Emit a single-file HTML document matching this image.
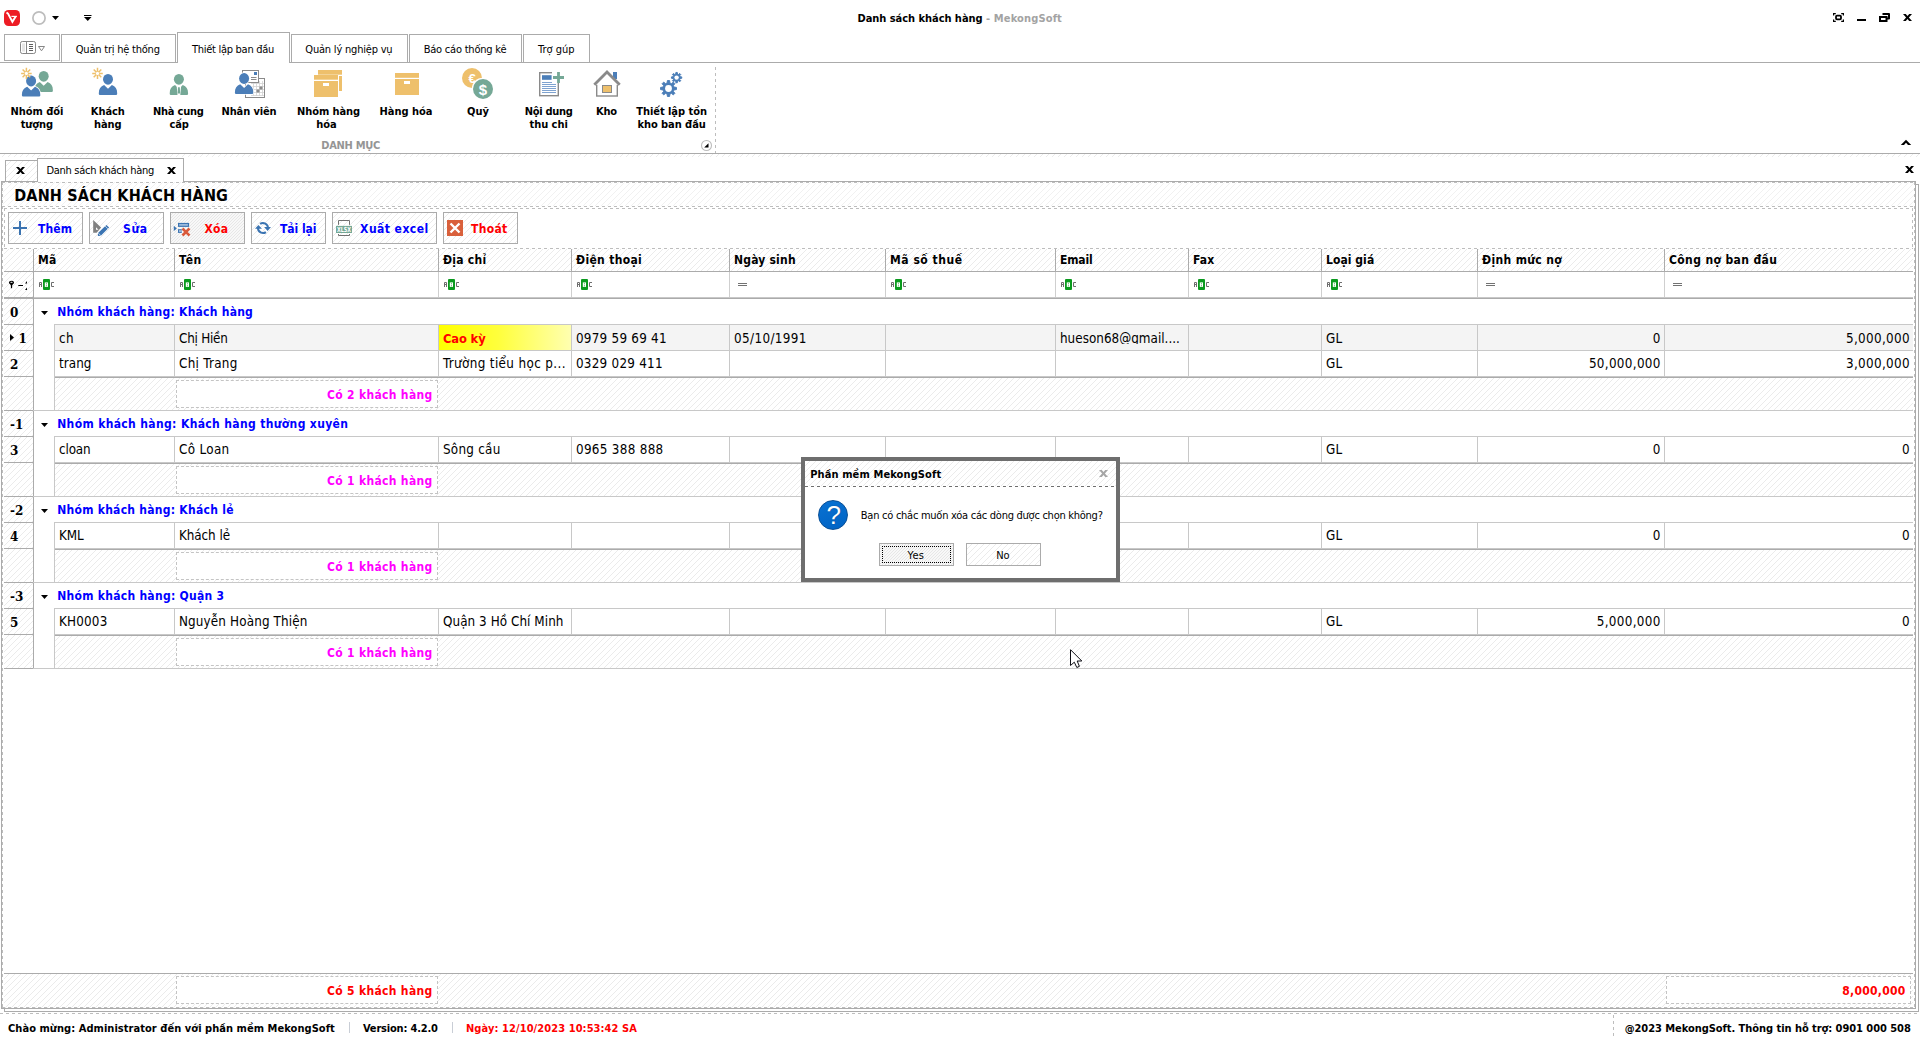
<!DOCTYPE html>
<html lang="vi"><head><meta charset="utf-8"><title>Danh sách khách hàng - MekongSoft</title>
<style>
html,body{margin:0;padding:0}
body{width:1920px;height:1038px;overflow:hidden;background:#fff;position:relative;font-family:'DejaVu Sans Condensed','DejaVu Sans','Liberation Sans',sans-serif;font-stretch:condensed;font-size:11px;color:#000}
body>div,body>svg,.t{position:absolute}
svg{overflow:visible}
.t{white-space:pre;line-height:normal}
.h{background-color:#fff;background-image:repeating-linear-gradient(135deg,transparent 0,transparent 3.45px,#ebebeb 3.45px,#ebebeb 4.2426px)}
.hl{background-image:repeating-linear-gradient(135deg,transparent 0,transparent 3.45px,#f1f1f1 3.45px,#f1f1f1 4.2426px)}
.hh{background-image:repeating-linear-gradient(135deg,#f8f8f8 0,#f8f8f8 1.06px,#e7e7e7 1.06px,#e7e7e7 2.1213px)}
.hd{background-image:repeating-linear-gradient(90deg,#bdbdbd 0,#bdbdbd 3px,transparent 3px,transparent 6px)}
.vd{background-image:repeating-linear-gradient(180deg,#bdbdbd 0,#bdbdbd 3px,transparent 3px,transparent 6px)}
.dk{background-image:repeating-linear-gradient(90deg,#6e6e6e 0,#6e6e6e 3px,transparent 3px,transparent 6px)}
</style></head><body>
<!-- title bar -->
<svg style="left:4px;top:10px" width="16" height="16" viewBox="0 0 16 16"><rect width="16" height="16" rx="4.5" fill="#ed1c24"/><path d="M2.5 2.4L4 3.6L8.4 11.8L11.7 6.4" fill="none" stroke="#fff" stroke-width="1.9" stroke-linejoin="miter" stroke-miterlimit="6"/><path d="M7.4 6.4H12.9" stroke="#fff" stroke-width="1.2"/></svg>
<svg style="left:31px;top:10px" width="16" height="16" viewBox="0 0 16 16"><circle cx="8" cy="8" r="6.1" fill="none" stroke="#bdbdbd" stroke-width="1.7"/></svg>
<svg style="left:52px;top:16px" width="7" height="4" viewBox="0 0 7 4"><path d="M0 0h7L3.5 4z" fill="#000"/></svg>
<svg style="left:84px;top:14px" width="8" height="7" viewBox="0 0 8 7"><path d="M0 1.5h7.5" stroke="#000" stroke-width="1"/><path d="M0 3h7.5L3.75 7z" fill="#000"/></svg>
<span class="t" style="left:857.5px;top:12px;font-size:11px;font-weight:700;letter-spacing:-0.04px;">Danh sách khách hàng</span>
<span class="t" style="left:986.0px;top:12px;font-size:11px;font-weight:700;color:#a3a3a3;letter-spacing:0.14px;">- MekongSoft</span>
<svg style="left:1833px;top:13px" width="11" height="9" viewBox="0 0 11 9"><g fill="none" stroke="#000" stroke-width="1.2"><path d="M0.6 2.6V0.6H2.8M8.2 0.6H10.4V2.6M10.4 6.4V8.4H8.2M2.8 8.4H0.6V6.4"/></g><rect x="3" y="2.7" width="5" height="3.6" rx="1" fill="none" stroke="#000" stroke-width="1.8"/></svg>
<div style="left:1857px;top:19px;width:9px;height:2px;background:#000"></div>
<svg style="left:1879px;top:13px" width="11" height="9" viewBox="0 0 11 9"><path d="M3.5 1h6.5v4.5h-2" fill="none" stroke="#000" stroke-width="2" stroke-linejoin="round"/><rect x="1" y="4" width="6.5" height="4" fill="none" stroke="#000" stroke-width="2"/></svg>
<svg style="left:1903px;top:14px" width="9" height="7" viewBox="0 0 9 7"><path d="M0 0h2.8l1.7 2.1l1.7-2.1h2.8l-3.1 3.5l3.1 3.5h-2.8l-1.7-2.1l-1.7 2.1h-2.8l3.1-3.5z" fill="#000"/></svg>
<!-- ribbon tabs -->
<div style="left:0px;top:62px;width:1920px;height:1px;background:#ababab"></div>
<div style="left:4px;top:34px;width:56px;height:27px;border:1px solid #ababab;box-sizing:border-box;background:#fff"></div>
<svg style="left:20px;top:41px" width="26" height="13" viewBox="0 0 26 13"><rect x="0.5" y="0.5" width="15" height="12" rx="1.8" fill="#fff" stroke="#868686"/><path d="M6.5 0.5v12" stroke="#868686"/><rect x="2" y="2.5" width="3" height="8" fill="#e6e6e6"/><path d="M9 3.5h4M9 5.5h4M9 7.5h4M9 9.5h4" stroke="#5e5e5e" stroke-width="1"/><path d="M18.5 5.5h6l-3 4.3z" fill="#fff" stroke="#868686" stroke-width="1"/></svg>
<div style="left:61px;top:34px;width:115px;height:29px;border:1px solid #ababab;border-bottom:none;box-sizing:border-box;background:#fff"></div>
<div style="left:61px;top:62px;width:115px;height:1px;background:#ababab"></div>
<span class="t" style="left:75.8px;top:43px;font-size:11px;letter-spacing:-0.22px;">Quản trị hệ thống</span>
<div style="left:177px;top:32px;width:113px;height:31px;border:1px solid #ababab;border-bottom:none;box-sizing:border-box;background:#fff"></div>
<span class="t" style="left:191.9px;top:43px;font-size:11px;letter-spacing:-0.27px;">Thiết lập ban đầu</span>
<div style="left:291px;top:34px;width:117px;height:29px;border:1px solid #ababab;border-bottom:none;box-sizing:border-box;background:#fff"></div>
<div style="left:291px;top:62px;width:117px;height:1px;background:#ababab"></div>
<span class="t" style="left:305.3px;top:43px;font-size:11px;letter-spacing:-0.20px;">Quản lý nghiệp vụ</span>
<div style="left:409px;top:34px;width:113px;height:29px;border:1px solid #ababab;border-bottom:none;box-sizing:border-box;background:#fff"></div>
<div style="left:409px;top:62px;width:113px;height:1px;background:#ababab"></div>
<span class="t" style="left:423.7px;top:43px;font-size:11px;letter-spacing:-0.22px;">Báo cáo thống kê</span>
<div style="left:523px;top:34px;width:67px;height:29px;border:1px solid #ababab;border-bottom:none;box-sizing:border-box;background:#fff"></div>
<div style="left:523px;top:62px;width:67px;height:1px;background:#ababab"></div>
<span class="t" style="left:538.0px;top:43px;font-size:11px;">Trợ gúp</span>
<!-- ribbon content -->
<svg style="left:21px;top:67px" width="32" height="32" viewBox="0 0 32 32"><g transform="translate(13.5,3.9) scale(1)" fill="#75a896"><ellipse cx="9.2" cy="5.4" rx="5" ry="5.4"/><path d="M0 19.5c0-4.5 1.8-7.3 5.3-8.4l3.9 3.7l3.9-3.7c3.5 1.1 5.3 3.9 5.3 8.4c0 1-0.6 1.5-1.6 1.5h-15.2c-1 0-1.6-0.5-1.6-1.5z"/></g><g stroke="#fff" stroke-width="1.4"><g transform="translate(0.9,8.6) scale(1)" fill="#4b7eb8"><ellipse cx="9.2" cy="5.4" rx="5" ry="5.4"/><path d="M0 19.5c0-4.5 1.8-7.3 5.3-8.4l3.9 3.7l3.9-3.7c3.5 1.1 5.3 3.9 5.3 8.4c0 1-0.6 1.5-1.6 1.5h-15.2c-1 0-1.6-0.5-1.6-1.5z"/></g></g><g transform="translate(0.9,8.6) scale(1)" fill="#4b7eb8"><ellipse cx="9.2" cy="5.4" rx="5" ry="5.4"/><path d="M0 19.5c0-4.5 1.8-7.3 5.3-8.4l3.9 3.7l3.9-3.7c3.5 1.1 5.3 3.9 5.3 8.4c0 1-0.6 1.5-1.6 1.5h-15.2c-1 0-1.6-0.5-1.6-1.5z"/></g><g transform="translate(0.1,0.8)" stroke="#eec06c" stroke-width="1.5" fill="none"><path d="M5.3 0v11.2M0 5.6h10.6M1.5 1.7l7.6 7.8M9.1 1.7l-7.6 7.8"/><circle cx="5.3" cy="5.6" r="1.6" fill="#fff" stroke="none"/></g></svg>
<svg style="left:92px;top:67px" width="26" height="30" viewBox="0 0 26 30"><g transform="translate(0.2,0.8)" stroke="#eec06c" stroke-width="1.5" fill="none"><path d="M5.3 0v11.2M0 5.6h10.6M1.5 1.7l7.6 7.8M9.1 1.7l-7.6 7.8"/><circle cx="5.3" cy="5.6" r="1.6" fill="#fff" stroke="none"/></g><g transform="translate(6.8,6.9) scale(1)" fill="#4b7eb8"><ellipse cx="9.2" cy="5.4" rx="5" ry="5.4"/><path d="M0 19.5c0-4.5 1.8-7.3 5.3-8.4l3.9 3.7l3.9-3.7c3.5 1.1 5.3 3.9 5.3 8.4c0 1-0.6 1.5-1.6 1.5h-15.2c-1 0-1.6-0.5-1.6-1.5z"/></g></svg>
<svg style="left:169px;top:73px" width="20" height="23" viewBox="0 0 20 23"><g transform="translate(0.7,0.9) scale(1)" fill="#75a896"><ellipse cx="9.2" cy="5.4" rx="5" ry="5.4"/><path d="M0 19.5c0-4.5 1.8-7.3 5.3-8.4l3.9 3.7l3.9-3.7c3.5 1.1 5.3 3.9 5.3 8.4c0 1-0.6 1.5-1.6 1.5h-15.2c-1 0-1.6-0.5-1.6-1.5z"/></g><path d="M7.6 12.3l2.3 2.4l2.3-2.4l-0.9 9.6h-2.8z" fill="#fff"/><path d="M9 14.3h1.8l0.4 6.3h-2.6z" fill="#75a896"/></svg>
<svg style="left:234px;top:70px" width="32" height="28" viewBox="0 0 32 28"><rect x="11.5" y="8.5" width="19" height="19" fill="#fff" stroke="#8a8a8a"/><g stroke="#d2d2d2" stroke-width="0.8"><path d="M19.5 11v15M22.5 11v15M25.5 11v15M28.5 11v15M17 13.5h13M17 16.5h13M17 19.5h13M17 22.5h13M17 25.5h13"/></g><rect x="25.5" y="16.5" width="3" height="3" fill="#8a8a8a"/><rect x="22.5" y="19.5" width="3" height="3" fill="#8a8a8a"/><rect x="8.5" y="0.5" width="16" height="12" fill="#fff" stroke="#8a8a8a"/><rect x="20" y="2" width="3" height="3" fill="#4b7eb8"/><path d="M17 7.5h5.5M17 9.5h5.5" stroke="#8a8a8a"/><g stroke="#fff" stroke-width="1.5"><g transform="translate(0.9,3.1) scale(1)" fill="#4b7eb8"><ellipse cx="9.2" cy="5.4" rx="5" ry="5.4"/><path d="M0 19.5c0-4.5 1.8-7.3 5.3-8.4l3.9 3.7l3.9-3.7c3.5 1.1 5.3 3.9 5.3 8.4c0 1-0.6 1.5-1.6 1.5h-15.2c-1 0-1.6-0.5-1.6-1.5z"/></g></g><g transform="translate(0.9,3.1) scale(1)" fill="#4b7eb8"><ellipse cx="9.2" cy="5.4" rx="5" ry="5.4"/><path d="M0 19.5c0-4.5 1.8-7.3 5.3-8.4l3.9 3.7l3.9-3.7c3.5 1.1 5.3 3.9 5.3 8.4c0 1-0.6 1.5-1.6 1.5h-15.2c-1 0-1.6-0.5-1.6-1.5z"/></g></svg>
<svg style="left:314px;top:70px" width="28" height="27" viewBox="0 0 28 27"><g fill="#eec06c"><rect x="4" y="0" width="24" height="4.7"/><rect x="25" y="6" width="3" height="15"/><rect x="0" y="5" width="24" height="4.7"/><rect x="0" y="11" width="24" height="16"/></g><rect x="9" y="13" width="6" height="3" fill="#fff"/></svg>
<svg style="left:395px;top:73px" width="24" height="22" viewBox="0 0 24 22"><g fill="#eec06c"><rect x="0" y="0" width="24" height="4.8"/><rect x="0" y="6" width="24" height="16"/></g><rect x="9" y="8" width="6" height="3" fill="#fff"/></svg>
<svg style="left:461px;top:67px" width="34" height="33" viewBox="0 0 34 33"><circle cx="11" cy="11" r="10" fill="#eec06c"/><circle cx="22" cy="22" r="11.2" fill="#fff"/><circle cx="22" cy="22" r="10" fill="#75a896"/><text x="11" y="15.5" text-anchor="middle" font-family="Liberation Sans,sans-serif" font-weight="700" font-size="13" fill="#fff">€</text><text x="22" y="27.5" text-anchor="middle" font-family="Liberation Sans,sans-serif" font-weight="700" font-size="15" fill="#fff">$</text></svg>
<svg style="left:539px;top:71px" width="26" height="26" viewBox="0 0 26 26"><rect x="0.7" y="1.7" width="18.6" height="23" fill="#fff" stroke="#8a8a8a" stroke-width="1.4"/><rect x="3" y="4.2" width="9.6" height="4.6" fill="#4b7eb8"/><g stroke="#7fa3d0" stroke-width="1"><path d="M3 11.5h14M3 13.5h14M3 15.5h14M3 17.5h14M3 19.5h14M3 21.5h14"/></g><rect x="13" y="0" width="13" height="12" fill="#fff"/><path d="M19.5 1v11M14 6.5h11" stroke="#75a896" stroke-width="2.8"/></svg>
<svg style="left:593px;top:69px" width="29" height="29" viewBox="0 0 29 29"><rect x="20" y="3" width="4" height="7" fill="#4b7eb8"/><rect x="3.7" y="14" width="20.6" height="13" fill="#fff" stroke="#8a8a8a" stroke-width="1.4"/><path d="M1.3 15.7L14 3L26.7 15.7" fill="#fff" stroke="#8a8a8a" stroke-width="2.8" stroke-linejoin="miter"/><rect x="9.5" y="16.5" width="9" height="7" fill="#eec06c" stroke="#8a8a8a" stroke-width="1"/></svg>
<svg style="left:658px;top:70px" width="26" height="28" viewBox="0 0 26 28"><path d="M18.43 17.41L18.43 19.59L15.92 19.92L15.33 21.33L16.87 23.34L15.34 24.87L13.33 23.33L11.92 23.92L11.59 26.43L9.41 26.43L9.08 23.92L7.67 23.33L5.66 24.87L4.13 23.34L5.67 21.33L5.08 19.92L2.57 19.59L2.57 17.41L5.08 17.08L5.67 15.67L4.13 13.66L5.66 12.13L7.67 13.67L9.08 13.08L9.41 10.57L11.59 10.57L11.92 13.08L13.33 13.67L15.34 12.13L16.87 13.66L15.33 15.67L15.92 17.08Z" fill="#4b7eb8" stroke="#4b7eb8" stroke-width="1" stroke-linejoin="round"/><circle cx="10.5" cy="18.5" r="3.4" fill="#fff"/><path d="M23.75 6.89L23.75 8.31L22.08 8.51L21.71 9.42L22.74 10.74L21.74 11.74L20.42 10.71L19.51 11.08L19.31 12.75L17.89 12.75L17.69 11.08L16.78 10.71L15.46 11.74L14.46 10.74L15.49 9.42L15.12 8.51L13.45 8.31L13.45 6.89L15.12 6.69L15.49 5.78L14.46 4.46L15.46 3.46L16.78 4.49L17.69 4.12L17.89 2.45L19.31 2.45L19.51 4.12L20.42 4.49L21.74 3.46L22.74 4.46L21.71 5.78L22.08 6.69Z" fill="#4b7eb8" stroke="#4b7eb8" stroke-width="1" stroke-linejoin="round"/><circle cx="18.6" cy="7.6" r="2.2" fill="#fff"/></svg>
<span class="t" style="left:10.5px;top:105px;font-size:11px;font-weight:700;letter-spacing:-0.05px;">Nhóm đối</span>
<span class="t" style="left:20.7px;top:118px;font-size:11px;font-weight:700;letter-spacing:-0.05px;">tượng</span>
<span class="t" style="left:90.8px;top:105px;font-size:11px;font-weight:700;letter-spacing:-0.05px;">Khách</span>
<span class="t" style="left:94.0px;top:118px;font-size:11px;font-weight:700;letter-spacing:-0.05px;">hàng</span>
<span class="t" style="left:152.9px;top:105px;font-size:11px;font-weight:700;letter-spacing:-0.21px;">Nhà cung</span>
<span class="t" style="left:169.4px;top:118px;font-size:11px;font-weight:700;letter-spacing:-0.05px;">cấp</span>
<span class="t" style="left:221.5px;top:105px;font-size:11px;font-weight:700;letter-spacing:-0.12px;">Nhân viên</span>
<span class="t" style="left:297.0px;top:105px;font-size:11px;font-weight:700;letter-spacing:-0.08px;">Nhóm hàng</span>
<span class="t" style="left:316.2px;top:118px;font-size:11px;font-weight:700;letter-spacing:-0.05px;">hóa</span>
<span class="t" style="left:379.6px;top:105px;font-size:11px;font-weight:700;letter-spacing:-0.03px;">Hàng hóa</span>
<span class="t" style="left:467.1px;top:105px;font-size:11px;font-weight:700;letter-spacing:-0.04px;">Quỹ</span>
<span class="t" style="left:524.8px;top:105px;font-size:11px;font-weight:700;letter-spacing:-0.32px;">Nội dung</span>
<span class="t" style="left:529.5px;top:118px;font-size:11px;font-weight:700;letter-spacing:-0.05px;">thu chi</span>
<span class="t" style="left:596.0px;top:105px;font-size:11px;font-weight:700;letter-spacing:-0.18px;">Kho</span>
<span class="t" style="left:636.2px;top:105px;font-size:11px;font-weight:700;letter-spacing:-0.04px;">Thiết lập tồn</span>
<span class="t" style="left:637.4px;top:118px;font-size:11px;font-weight:700;letter-spacing:-0.05px;">kho ban đầu</span>
<span class="t" style="left:321.2px;top:139px;font-size:11px;font-weight:700;color:#959595;letter-spacing:-0.28px;">DANH MỤC</span>
<div class="vd" style="left:715px;top:67px;width:1px;height:86px;"></div>
<svg style="left:701px;top:140px" width="12" height="12" viewBox="0 0 12 12"><circle cx="5.5" cy="5.5" r="5" fill="#fff" stroke="#bdbdbd" stroke-width="1.1"/><path d="M7.5 3.2v4.3h-4.3z" fill="#000"/></svg>
<svg style="left:1900px;top:139px" width="12" height="7" viewBox="0 0 12 7"><path d="M0.8 6H4L6 3.8L8 6H11.2L6 0.7Z" fill="#000"/></svg>
<div style="left:0px;top:153px;width:1920px;height:1px;background:#ababab"></div>
<div class="h" style="left:0px;top:154px;width:1920px;height:3px;"></div>
<!-- document tabs -->
<div class="h" style="left:5px;top:160px;width:33px;height:22px;border:1px solid #ababab;border-bottom:none;box-sizing:border-box"></div>
<svg style="left:16px;top:167px" width="9" height="7" viewBox="0 0 9 7"><path d="M0 0h2.8l1.7 2.1l1.7-2.1h2.8l-3.1 3.5l3.1 3.5h-2.8l-1.7-2.1l-1.7 2.1h-2.8l3.1-3.5z" fill="#000"/></svg>
<svg style="left:1905px;top:166px" width="9" height="7" viewBox="0 0 9 7"><path d="M0 0h2.8l1.7 2.1l1.7-2.1h2.8l-3.1 3.5l3.1 3.5h-2.8l-1.7-2.1l-1.7 2.1h-2.8l3.1-3.5z" fill="#000"/></svg>
<div style="left:1px;top:181px;width:1915px;height:828px;border:1px solid #ababab;box-sizing:border-box;background:#fff"></div>
<div style="left:37px;top:158px;width:147px;height:24px;border:1px solid #ababab;border-bottom:none;box-sizing:border-box;background:#fff"></div>
<span class="t" style="left:46.4px;top:164px;font-size:11px;letter-spacing:-0.28px;">Danh sách khách hàng</span>
<svg style="left:167px;top:167px" width="9" height="7" viewBox="0 0 9 7"><path d="M0 0h2.8l1.7 2.1l1.7-2.1h2.8l-3.1 3.5l3.1 3.5h-2.8l-1.7-2.1l-1.7 2.1h-2.8l3.1-3.5z" fill="#000"/></svg>
<div style="left:1916px;top:184px;width:3px;height:828px;border:1px solid #ababab;border-left:none;box-sizing:border-box"></div>
<div style="left:4px;top:1009px;width:1915px;height:3px;border:1px solid #ababab;border-top:none;box-sizing:border-box"></div>
<div class="h hl" style="left:2px;top:182px;width:1913px;height:24px;"></div>
<div class="hd" style="left:2px;top:182px;width:1913px;height:1px;"></div>
<div class="vd" style="left:2px;top:182px;width:1px;height:826px;"></div>
<div class="vd" style="left:1914px;top:182px;width:1px;height:826px;"></div>
<span class="t" style="left:14.2px;top:186px;font-size:16px;font-weight:700;letter-spacing:0.18px;">DANH SÁCH KHÁCH HÀNG</span>
<div class="hd" style="left:2px;top:206px;width:1913px;height:1px;"></div>
<div class="hd" style="left:4px;top:208px;width:1909px;height:1px;"></div>
<div class="vd" style="left:4px;top:208px;width:1px;height:41px;"></div>
<div class="vd" style="left:1912px;top:208px;width:1px;height:41px;"></div>
<div class="hd" style="left:4px;top:248px;width:1909px;height:1px;"></div>
<div class="h" style="left:8px;top:212px;width:75px;height:32px;border:1px solid #ababab;box-sizing:border-box"></div>
<div class="h" style="left:89px;top:212px;width:75px;height:32px;border:1px solid #ababab;box-sizing:border-box"></div>
<div class="h hh" style="left:170px;top:212px;width:75px;height:32px;border:1px solid #ababab;box-sizing:border-box;background-color:#f4f4f4"></div>
<div class="h" style="left:251px;top:212px;width:75px;height:32px;border:1px solid #ababab;box-sizing:border-box"></div>
<div class="h" style="left:332px;top:212px;width:105px;height:32px;border:1px solid #ababab;box-sizing:border-box"></div>
<div class="h" style="left:443px;top:212px;width:75px;height:32px;border:1px solid #ababab;box-sizing:border-box"></div>
<svg style="left:13px;top:221px" width="14" height="14" viewBox="0 0 14 14"><path d="M7 0v14M0 7h14" stroke="#3b73b0" stroke-width="2"/></svg>
<svg style="left:93px;top:220px" width="16" height="16" viewBox="0 0 16 16"><path d="M0.2 0L0.2 12.8L3.7 12.8L8.1 7.5Z" fill="#808080"/><path d="M3 7.3v2.5h2.5z" fill="#fff"/><path d="M13.4 4.9L16.1 7.6L7.8 15.7L4.9 15.9L5 12.9Z" fill="#3b74b2"/><path d="M12.2 6.1l2.7 2.7M5.2 13l2.6 2.6" stroke="#fff" stroke-width="0.7"/></svg>
<svg style="left:174px;top:222px" width="17" height="15" viewBox="0 0 17 15"><path d="M-0.2 3.7L2.9 6.4L-0.2 9.1z" fill="#3b74b2"/><rect x="4" y="0.9" width="11.1" height="4" fill="#3b74b2"/><rect x="5.2" y="2.1" width="8.7" height="1.6" fill="#a9c3e0"/><rect x="4" y="7.2" width="3.8" height="3.7" fill="#3b74b2"/><rect x="5" y="8.2" width="2.8" height="1.7" fill="#a9c3e0"/><path d="M9.4 7.4l5.2 5.2M14.6 7.4l-5.2 5.2" stroke="#d9593a" stroke-width="2.6" stroke-linecap="square"/></svg>
<svg style="left:255px;top:222px" width="16" height="12" viewBox="0 0 16 12"><g fill="none" stroke="#3b74b2" stroke-width="2"><path d="M5.1 1.9A5 5 0 0 1 13 6"/><path d="M10.9 10.1A5 5 0 0 1 3 6"/></g><path d="M9.1 5.1H16L12.6 9.1Z" fill="#3b74b2"/><path d="M0 6.8H7L3.4 2.9Z" fill="#3b74b2"/></svg>
<svg style="left:336px;top:220px" width="16" height="16" viewBox="0 0 16 16"><path d="M2.5 4.8V0.5H13.5V4.8M2.5 14V15.5H13.5V14" fill="none" stroke="#707070"/><rect x="0" y="5.9" width="16" height="7.1" fill="#75a896"/><text x="1" y="12" font-family="DejaVu Sans Condensed,sans-serif" font-weight="700" font-size="7" fill="#fff" textLength="14" lengthAdjust="spacingAndGlyphs">XLSX</text></svg>
<svg style="left:447px;top:220px" width="16" height="16" viewBox="0 0 16 16"><rect width="16" height="16" fill="#d9603b"/><path d="M3.5 3.5l9 9M12.5 3.5l-9 9" stroke="#fff" stroke-width="2.4"/></svg>
<span class="t" style="left:38.0px;top:222px;font-size:12px;font-weight:700;color:#00f;letter-spacing:0.09px;">Thêm</span>
<span class="t" style="left:123.0px;top:222px;font-size:12px;font-weight:700;color:#00f;letter-spacing:0.68px;">Sửa</span>
<span class="t" style="left:204.4px;top:222px;font-size:12px;font-weight:700;color:#f00;letter-spacing:0.29px;">Xóa</span>
<span class="t" style="left:280.0px;top:222px;font-size:12px;font-weight:700;color:#00f;letter-spacing:-0.05px;">Tải lại</span>
<span class="t" style="left:360.1px;top:222px;font-size:12px;font-weight:700;color:#00f;letter-spacing:0.46px;">Xuất excel</span>
<span class="t" style="left:471.0px;top:222px;font-size:12px;font-weight:700;color:#f00;letter-spacing:0.34px;">Thoát</span>
<!-- grid -->
<div class="h" style="left:4px;top:249px;width:1909px;height:22px;"></div>
<div style="left:4px;top:271px;width:1909px;height:1px;background:#ababab"></div>
<div class="h" style="left:4px;top:272px;width:29px;height:25px;"></div>
<div style="left:4px;top:297px;width:1909px;height:2px;background:#ababab"></div>
<div style="left:34px;top:297px;width:1879px;height:1px;background:#c8c8c8"></div>
<div style="left:33px;top:249px;width:1px;height:23px;background:#ababab"></div>
<span class="t" style="left:38.0px;top:253px;font-size:12px;font-weight:700;letter-spacing:0.23px;">Mã</span>
<div style="left:174px;top:249px;width:1px;height:23px;background:#ababab"></div>
<div style="left:174px;top:272px;width:1px;height:25px;background:#cfcfcf"></div>
<span class="t" style="left:179.0px;top:253px;font-size:12px;font-weight:700;letter-spacing:0.55px;">Tên</span>
<div style="left:438px;top:249px;width:1px;height:23px;background:#ababab"></div>
<div style="left:438px;top:272px;width:1px;height:25px;background:#cfcfcf"></div>
<span class="t" style="left:443.0px;top:253px;font-size:12px;font-weight:700;letter-spacing:0.27px;">Địa chỉ</span>
<div style="left:571px;top:249px;width:1px;height:23px;background:#ababab"></div>
<div style="left:571px;top:272px;width:1px;height:25px;background:#cfcfcf"></div>
<span class="t" style="left:576.0px;top:253px;font-size:12px;font-weight:700;letter-spacing:0.34px;">Điện thoại</span>
<div style="left:729px;top:249px;width:1px;height:23px;background:#ababab"></div>
<div style="left:729px;top:272px;width:1px;height:25px;background:#cfcfcf"></div>
<span class="t" style="left:734.0px;top:253px;font-size:12px;font-weight:700;letter-spacing:0.20px;">Ngày sinh</span>
<div style="left:885px;top:249px;width:1px;height:23px;background:#ababab"></div>
<div style="left:885px;top:272px;width:1px;height:25px;background:#cfcfcf"></div>
<span class="t" style="left:890.0px;top:253px;font-size:12px;font-weight:700;letter-spacing:0.53px;">Mã số thuế</span>
<div style="left:1055px;top:249px;width:1px;height:23px;background:#ababab"></div>
<div style="left:1055px;top:272px;width:1px;height:25px;background:#cfcfcf"></div>
<span class="t" style="left:1060.0px;top:253px;font-size:12px;font-weight:700;letter-spacing:-0.16px;">Email</span>
<div style="left:1188px;top:249px;width:1px;height:23px;background:#ababab"></div>
<div style="left:1188px;top:272px;width:1px;height:25px;background:#cfcfcf"></div>
<span class="t" style="left:1193.0px;top:253px;font-size:12px;font-weight:700;letter-spacing:0.09px;">Fax</span>
<div style="left:1321px;top:249px;width:1px;height:23px;background:#ababab"></div>
<div style="left:1321px;top:272px;width:1px;height:25px;background:#cfcfcf"></div>
<span class="t" style="left:1326.0px;top:253px;font-size:12px;font-weight:700;letter-spacing:0.06px;">Loại giá</span>
<div style="left:1477px;top:249px;width:1px;height:23px;background:#ababab"></div>
<div style="left:1477px;top:272px;width:1px;height:25px;background:#cfcfcf"></div>
<span class="t" style="left:1482.0px;top:253px;font-size:12px;font-weight:700;letter-spacing:0.36px;">Định mức nợ</span>
<div style="left:1664px;top:249px;width:1px;height:23px;background:#ababab"></div>
<div style="left:1664px;top:272px;width:1px;height:25px;background:#cfcfcf"></div>
<span class="t" style="left:1669.0px;top:253px;font-size:12px;font-weight:700;letter-spacing:0.38px;">Công nợ ban đầu</span>
<svg style="left:39px;top:279px" width="16" height="11" viewBox="0 0 16 11"><path d="M0.5 8V3.5H2.5V8M0.5 5.5H2.5" fill="none" stroke="#6e6e6e"/><rect x="4" y="0" width="7" height="11" rx="1" fill="#0a9a1e"/><rect x="5.8" y="3.4" width="3.2" height="4.5" fill="#fff"/><circle cx="7.4" cy="4.7" r="0.5" fill="#0a9a1e"/><circle cx="7.4" cy="6.7" r="0.5" fill="#0a9a1e"/><path d="M15 3.5H12.5V7.5H15" fill="none" stroke="#6e6e6e"/></svg>
<svg style="left:180px;top:279px" width="16" height="11" viewBox="0 0 16 11"><path d="M0.5 8V3.5H2.5V8M0.5 5.5H2.5" fill="none" stroke="#6e6e6e"/><rect x="4" y="0" width="7" height="11" rx="1" fill="#0a9a1e"/><rect x="5.8" y="3.4" width="3.2" height="4.5" fill="#fff"/><circle cx="7.4" cy="4.7" r="0.5" fill="#0a9a1e"/><circle cx="7.4" cy="6.7" r="0.5" fill="#0a9a1e"/><path d="M15 3.5H12.5V7.5H15" fill="none" stroke="#6e6e6e"/></svg>
<svg style="left:444px;top:279px" width="16" height="11" viewBox="0 0 16 11"><path d="M0.5 8V3.5H2.5V8M0.5 5.5H2.5" fill="none" stroke="#6e6e6e"/><rect x="4" y="0" width="7" height="11" rx="1" fill="#0a9a1e"/><rect x="5.8" y="3.4" width="3.2" height="4.5" fill="#fff"/><circle cx="7.4" cy="4.7" r="0.5" fill="#0a9a1e"/><circle cx="7.4" cy="6.7" r="0.5" fill="#0a9a1e"/><path d="M15 3.5H12.5V7.5H15" fill="none" stroke="#6e6e6e"/></svg>
<svg style="left:577px;top:279px" width="16" height="11" viewBox="0 0 16 11"><path d="M0.5 8V3.5H2.5V8M0.5 5.5H2.5" fill="none" stroke="#6e6e6e"/><rect x="4" y="0" width="7" height="11" rx="1" fill="#0a9a1e"/><rect x="5.8" y="3.4" width="3.2" height="4.5" fill="#fff"/><circle cx="7.4" cy="4.7" r="0.5" fill="#0a9a1e"/><circle cx="7.4" cy="6.7" r="0.5" fill="#0a9a1e"/><path d="M15 3.5H12.5V7.5H15" fill="none" stroke="#6e6e6e"/></svg>
<svg style="left:738px;top:282px" width="9" height="5" viewBox="0 0 9 5"><path d="M0 1.5h9M0 3.5h9" stroke="#727272"/></svg>
<svg style="left:891px;top:279px" width="16" height="11" viewBox="0 0 16 11"><path d="M0.5 8V3.5H2.5V8M0.5 5.5H2.5" fill="none" stroke="#6e6e6e"/><rect x="4" y="0" width="7" height="11" rx="1" fill="#0a9a1e"/><rect x="5.8" y="3.4" width="3.2" height="4.5" fill="#fff"/><circle cx="7.4" cy="4.7" r="0.5" fill="#0a9a1e"/><circle cx="7.4" cy="6.7" r="0.5" fill="#0a9a1e"/><path d="M15 3.5H12.5V7.5H15" fill="none" stroke="#6e6e6e"/></svg>
<svg style="left:1061px;top:279px" width="16" height="11" viewBox="0 0 16 11"><path d="M0.5 8V3.5H2.5V8M0.5 5.5H2.5" fill="none" stroke="#6e6e6e"/><rect x="4" y="0" width="7" height="11" rx="1" fill="#0a9a1e"/><rect x="5.8" y="3.4" width="3.2" height="4.5" fill="#fff"/><circle cx="7.4" cy="4.7" r="0.5" fill="#0a9a1e"/><circle cx="7.4" cy="6.7" r="0.5" fill="#0a9a1e"/><path d="M15 3.5H12.5V7.5H15" fill="none" stroke="#6e6e6e"/></svg>
<svg style="left:1194px;top:279px" width="16" height="11" viewBox="0 0 16 11"><path d="M0.5 8V3.5H2.5V8M0.5 5.5H2.5" fill="none" stroke="#6e6e6e"/><rect x="4" y="0" width="7" height="11" rx="1" fill="#0a9a1e"/><rect x="5.8" y="3.4" width="3.2" height="4.5" fill="#fff"/><circle cx="7.4" cy="4.7" r="0.5" fill="#0a9a1e"/><circle cx="7.4" cy="6.7" r="0.5" fill="#0a9a1e"/><path d="M15 3.5H12.5V7.5H15" fill="none" stroke="#6e6e6e"/></svg>
<svg style="left:1327px;top:279px" width="16" height="11" viewBox="0 0 16 11"><path d="M0.5 8V3.5H2.5V8M0.5 5.5H2.5" fill="none" stroke="#6e6e6e"/><rect x="4" y="0" width="7" height="11" rx="1" fill="#0a9a1e"/><rect x="5.8" y="3.4" width="3.2" height="4.5" fill="#fff"/><circle cx="7.4" cy="4.7" r="0.5" fill="#0a9a1e"/><circle cx="7.4" cy="6.7" r="0.5" fill="#0a9a1e"/><path d="M15 3.5H12.5V7.5H15" fill="none" stroke="#6e6e6e"/></svg>
<svg style="left:1486px;top:282px" width="9" height="5" viewBox="0 0 9 5"><path d="M0 1.5h9M0 3.5h9" stroke="#727272"/></svg>
<svg style="left:1673px;top:282px" width="9" height="5" viewBox="0 0 9 5"><path d="M0 1.5h9M0 3.5h9" stroke="#727272"/></svg>
<svg style="left:8px;top:279px" width="20" height="12" viewBox="0 0 20 12"><ellipse cx="3.5" cy="3.5" rx="2.6" ry="1.7" fill="#000"/><ellipse cx="3.5" cy="3.2" rx="1.2" ry="0.5" fill="#fff"/><path d="M1.3 4.3L3 6.5L4 6.5L5.7 4.3Z" fill="#000"/><rect x="2.9" y="6" width="1.2" height="3.2" fill="#000"/><path d="M10.3 6.5h4.7" stroke="#000"/><path d="M17 4.6L19 2V4.6ZM17 11L19 8.4V11Z" fill="#000"/></svg>
<div style="left:33px;top:272px;width:1px;height:397px;background:#ababab"></div>
<div class="h" style="left:4px;top:299px;width:29px;height:25px;"></div>
<div style="left:4px;top:324px;width:29px;height:1px;background:#ababab"></div>
<span class="t" style="left:10.0px;top:306px;font-size:12px;font-weight:700;font-family:'DejaVu Serif',serif;font-stretch:normal;">0</span>
<svg style="left:41px;top:311px" width="7" height="4" viewBox="0 0 7 4"><path d="M0 0h7L3.5 4z" fill="#000"/></svg>
<span class="t" style="left:57.2px;top:305px;font-size:12px;font-weight:700;color:#00f;letter-spacing:0.25px;">Nhóm khách hàng: Khách hàng</span>
<div style="left:54px;top:324px;width:1859px;height:1px;background:#c8c8c8"></div>
<div class="h" style="left:4px;top:325px;width:29px;height:25px;"></div>
<div style="left:4px;top:350px;width:29px;height:1px;background:#ababab"></div>
<svg style="left:10px;top:334px" width="4" height="7" viewBox="0 0 4 7"><path d="M0 0l4 3.5l-4 3.5z" fill="#000"/></svg>
<span class="t" style="left:18.6px;top:332px;font-size:12px;font-weight:700;font-family:'DejaVu Serif',serif;font-stretch:normal;">1</span>
<div style="left:55px;top:325px;width:1858px;height:25px;background:#f4f4f4"></div>
<div style="left:439px;top:325px;width:132px;height:25px;background:linear-gradient(90deg,#ffff00,#ffff3c 45%,#ffffb0)"></div>
<div style="left:54px;top:325px;width:1px;height:25px;background:#c8c8c8"></div>
<span class="t" style="left:59.0px;top:331px;font-size:13.33px;letter-spacing:0.40px;">ch</span>
<div style="left:174px;top:325px;width:1px;height:25px;background:#c8c8c8"></div>
<span class="t" style="left:179.0px;top:331px;font-size:13.33px;letter-spacing:-0.24px;">Chị Hiền</span>
<div style="left:438px;top:325px;width:1px;height:25px;background:#c8c8c8"></div>
<span class="t" style="left:443.0px;top:331px;font-size:12.8px;font-weight:700;color:#f00;letter-spacing:-0.13px;">Cao kỳ</span>
<div style="left:571px;top:325px;width:1px;height:25px;background:#c8c8c8"></div>
<span class="t" style="left:576.0px;top:331px;font-size:13.33px;letter-spacing:0.24px;">0979 59 69 41</span>
<div style="left:729px;top:325px;width:1px;height:25px;background:#c8c8c8"></div>
<span class="t" style="left:734.0px;top:331px;font-size:13.33px;letter-spacing:0.37px;">05/10/1991</span>
<div style="left:885px;top:325px;width:1px;height:25px;background:#c8c8c8"></div>
<div style="left:1055px;top:325px;width:1px;height:25px;background:#c8c8c8"></div>
<span class="t" style="left:1060.0px;top:331px;font-size:13.33px;letter-spacing:0.02px;height:13px;overflow:hidden;">hueson68@gmail....</span>
<div style="left:1188px;top:325px;width:1px;height:25px;background:#c8c8c8"></div>
<div style="left:1321px;top:325px;width:1px;height:25px;background:#c8c8c8"></div>
<span class="t" style="left:1326.0px;top:331px;font-size:13.33px;letter-spacing:0.11px;">GL</span>
<div style="left:1477px;top:325px;width:1px;height:25px;background:#c8c8c8"></div>
<span class="t" style="left:1652.7px;top:331px;font-size:13.33px;letter-spacing:0.33px;">0</span>
<div style="left:1664px;top:325px;width:1px;height:25px;background:#c8c8c8"></div>
<span class="t" style="left:1846.0px;top:331px;font-size:13.33px;letter-spacing:0.33px;">5,000,000</span>
<div style="left:54px;top:350px;width:1859px;height:1px;background:#c8c8c8"></div>
<div class="h" style="left:4px;top:351px;width:29px;height:25px;"></div>
<div style="left:4px;top:376px;width:29px;height:1px;background:#ababab"></div>
<span class="t" style="left:10.0px;top:358px;font-size:12px;font-weight:700;font-family:'DejaVu Serif',serif;font-stretch:normal;">2</span>
<div style="left:54px;top:351px;width:1px;height:25px;background:#c8c8c8"></div>
<span class="t" style="left:59.0px;top:356px;font-size:13.33px;letter-spacing:0.06px;">trang</span>
<div style="left:174px;top:351px;width:1px;height:25px;background:#c8c8c8"></div>
<span class="t" style="left:179.0px;top:356px;font-size:13.33px;letter-spacing:0.30px;">Chị Trang</span>
<div style="left:438px;top:351px;width:1px;height:25px;background:#c8c8c8"></div>
<span class="t" style="left:443.0px;top:356px;font-size:13.33px;letter-spacing:0.37px;">Trường tiểu học p...</span>
<div style="left:571px;top:351px;width:1px;height:25px;background:#c8c8c8"></div>
<span class="t" style="left:576.0px;top:356px;font-size:13.33px;letter-spacing:0.24px;">0329 029 411</span>
<div style="left:729px;top:351px;width:1px;height:25px;background:#c8c8c8"></div>
<div style="left:885px;top:351px;width:1px;height:25px;background:#c8c8c8"></div>
<div style="left:1055px;top:351px;width:1px;height:25px;background:#c8c8c8"></div>
<div style="left:1188px;top:351px;width:1px;height:25px;background:#c8c8c8"></div>
<div style="left:1321px;top:351px;width:1px;height:25px;background:#c8c8c8"></div>
<span class="t" style="left:1326.0px;top:356px;font-size:13.33px;letter-spacing:0.11px;">GL</span>
<div style="left:1477px;top:351px;width:1px;height:25px;background:#c8c8c8"></div>
<span class="t" style="left:1588.9px;top:356px;font-size:13.33px;letter-spacing:0.32px;">50,000,000</span>
<div style="left:1664px;top:351px;width:1px;height:25px;background:#c8c8c8"></div>
<span class="t" style="left:1846.0px;top:356px;font-size:13.33px;letter-spacing:0.33px;">3,000,000</span>
<div style="left:54px;top:376px;width:1859px;height:1px;background:#c8c8c8"></div>
<div style="left:55px;top:377px;width:1858px;height:1px;background:#ababab"></div>
<div class="h" style="left:4px;top:377px;width:29px;height:33px;"></div>
<div class="h" style="left:55px;top:378px;width:1858px;height:32px;"></div>
<div style="left:54px;top:377px;width:1px;height:34px;background:#c8c8c8"></div>
<div style="left:176px;top:380px;width:262px;height:28px;border:1px dashed #c4c4c4;box-sizing:border-box;background:#fff"></div>
<span class="t" style="left:327.0px;top:388px;font-size:12px;font-weight:700;color:#f0f;letter-spacing:0.32px;">Có 2 khách hàng</span>
<div style="left:4px;top:410px;width:1909px;height:1px;background:#c8c8c8"></div>
<div style="left:4px;top:410px;width:29px;height:1px;background:#ababab"></div>
<div class="h" style="left:4px;top:411px;width:29px;height:25px;"></div>
<div style="left:4px;top:436px;width:29px;height:1px;background:#ababab"></div>
<span class="t" style="left:10.0px;top:418px;font-size:12px;font-weight:700;font-family:'DejaVu Serif',serif;font-stretch:normal;">-1</span>
<svg style="left:41px;top:423px" width="7" height="4" viewBox="0 0 7 4"><path d="M0 0h7L3.5 4z" fill="#000"/></svg>
<span class="t" style="left:57.2px;top:417px;font-size:12px;font-weight:700;color:#00f;letter-spacing:0.36px;">Nhóm khách hàng: Khách hàng thường xuyên</span>
<div style="left:54px;top:436px;width:1859px;height:1px;background:#c8c8c8"></div>
<div class="h" style="left:4px;top:437px;width:29px;height:25px;"></div>
<div style="left:4px;top:462px;width:29px;height:1px;background:#ababab"></div>
<span class="t" style="left:10.0px;top:444px;font-size:12px;font-weight:700;font-family:'DejaVu Serif',serif;font-stretch:normal;">3</span>
<div style="left:54px;top:437px;width:1px;height:25px;background:#c8c8c8"></div>
<span class="t" style="left:59.0px;top:442px;font-size:13.33px;letter-spacing:-0.14px;">cloan</span>
<div style="left:174px;top:437px;width:1px;height:25px;background:#c8c8c8"></div>
<span class="t" style="left:179.0px;top:442px;font-size:13.33px;letter-spacing:0.32px;">Cô Loan</span>
<div style="left:438px;top:437px;width:1px;height:25px;background:#c8c8c8"></div>
<span class="t" style="left:443.0px;top:442px;font-size:13.33px;letter-spacing:0.25px;">Sông cầu</span>
<div style="left:571px;top:437px;width:1px;height:25px;background:#c8c8c8"></div>
<span class="t" style="left:576.0px;top:442px;font-size:13.33px;letter-spacing:0.30px;">0965 388 888</span>
<div style="left:729px;top:437px;width:1px;height:25px;background:#c8c8c8"></div>
<div style="left:885px;top:437px;width:1px;height:25px;background:#c8c8c8"></div>
<div style="left:1055px;top:437px;width:1px;height:25px;background:#c8c8c8"></div>
<div style="left:1188px;top:437px;width:1px;height:25px;background:#c8c8c8"></div>
<div style="left:1321px;top:437px;width:1px;height:25px;background:#c8c8c8"></div>
<span class="t" style="left:1326.0px;top:442px;font-size:13.33px;letter-spacing:0.11px;">GL</span>
<div style="left:1477px;top:437px;width:1px;height:25px;background:#c8c8c8"></div>
<span class="t" style="left:1652.7px;top:442px;font-size:13.33px;letter-spacing:0.33px;">0</span>
<div style="left:1664px;top:437px;width:1px;height:25px;background:#c8c8c8"></div>
<span class="t" style="left:1902.0px;top:442px;font-size:13.33px;letter-spacing:0.33px;">0</span>
<div style="left:54px;top:462px;width:1859px;height:1px;background:#c8c8c8"></div>
<div style="left:55px;top:463px;width:1858px;height:1px;background:#ababab"></div>
<div class="h" style="left:4px;top:463px;width:29px;height:33px;"></div>
<div class="h" style="left:55px;top:464px;width:1858px;height:32px;"></div>
<div style="left:54px;top:463px;width:1px;height:34px;background:#c8c8c8"></div>
<div style="left:176px;top:466px;width:262px;height:28px;border:1px dashed #c4c4c4;box-sizing:border-box;background:#fff"></div>
<span class="t" style="left:327.0px;top:474px;font-size:12px;font-weight:700;color:#f0f;letter-spacing:0.32px;">Có 1 khách hàng</span>
<div style="left:4px;top:496px;width:1909px;height:1px;background:#c8c8c8"></div>
<div style="left:4px;top:496px;width:29px;height:1px;background:#ababab"></div>
<div class="h" style="left:4px;top:497px;width:29px;height:25px;"></div>
<div style="left:4px;top:522px;width:29px;height:1px;background:#ababab"></div>
<span class="t" style="left:10.0px;top:504px;font-size:12px;font-weight:700;font-family:'DejaVu Serif',serif;font-stretch:normal;">-2</span>
<svg style="left:41px;top:509px" width="7" height="4" viewBox="0 0 7 4"><path d="M0 0h7L3.5 4z" fill="#000"/></svg>
<span class="t" style="left:57.2px;top:503px;font-size:12px;font-weight:700;color:#00f;letter-spacing:0.27px;">Nhóm khách hàng: Khách lẻ</span>
<div style="left:54px;top:522px;width:1859px;height:1px;background:#c8c8c8"></div>
<div class="h" style="left:4px;top:523px;width:29px;height:25px;"></div>
<div style="left:4px;top:548px;width:29px;height:1px;background:#ababab"></div>
<span class="t" style="left:10.0px;top:530px;font-size:12px;font-weight:700;font-family:'DejaVu Serif',serif;font-stretch:normal;">4</span>
<div style="left:54px;top:523px;width:1px;height:25px;background:#c8c8c8"></div>
<span class="t" style="left:59.0px;top:528px;font-size:13.33px;letter-spacing:-0.13px;">KML</span>
<div style="left:174px;top:523px;width:1px;height:25px;background:#c8c8c8"></div>
<span class="t" style="left:179.0px;top:528px;font-size:13.33px;letter-spacing:-0.07px;">Khách lẻ</span>
<div style="left:438px;top:523px;width:1px;height:25px;background:#c8c8c8"></div>
<div style="left:571px;top:523px;width:1px;height:25px;background:#c8c8c8"></div>
<div style="left:729px;top:523px;width:1px;height:25px;background:#c8c8c8"></div>
<div style="left:885px;top:523px;width:1px;height:25px;background:#c8c8c8"></div>
<div style="left:1055px;top:523px;width:1px;height:25px;background:#c8c8c8"></div>
<div style="left:1188px;top:523px;width:1px;height:25px;background:#c8c8c8"></div>
<div style="left:1321px;top:523px;width:1px;height:25px;background:#c8c8c8"></div>
<span class="t" style="left:1326.0px;top:528px;font-size:13.33px;letter-spacing:0.11px;">GL</span>
<div style="left:1477px;top:523px;width:1px;height:25px;background:#c8c8c8"></div>
<span class="t" style="left:1652.7px;top:528px;font-size:13.33px;letter-spacing:0.33px;">0</span>
<div style="left:1664px;top:523px;width:1px;height:25px;background:#c8c8c8"></div>
<span class="t" style="left:1902.0px;top:528px;font-size:13.33px;letter-spacing:0.33px;">0</span>
<div style="left:54px;top:548px;width:1859px;height:1px;background:#c8c8c8"></div>
<div style="left:55px;top:549px;width:1858px;height:1px;background:#ababab"></div>
<div class="h" style="left:4px;top:549px;width:29px;height:33px;"></div>
<div class="h" style="left:55px;top:550px;width:1858px;height:32px;"></div>
<div style="left:54px;top:549px;width:1px;height:34px;background:#c8c8c8"></div>
<div style="left:176px;top:552px;width:262px;height:28px;border:1px dashed #c4c4c4;box-sizing:border-box;background:#fff"></div>
<span class="t" style="left:327.0px;top:560px;font-size:12px;font-weight:700;color:#f0f;letter-spacing:0.32px;">Có 1 khách hàng</span>
<div style="left:4px;top:582px;width:1909px;height:1px;background:#c8c8c8"></div>
<div style="left:4px;top:582px;width:29px;height:1px;background:#ababab"></div>
<div class="h" style="left:4px;top:583px;width:29px;height:25px;"></div>
<div style="left:4px;top:608px;width:29px;height:1px;background:#ababab"></div>
<span class="t" style="left:10.0px;top:590px;font-size:12px;font-weight:700;font-family:'DejaVu Serif',serif;font-stretch:normal;">-3</span>
<svg style="left:41px;top:595px" width="7" height="4" viewBox="0 0 7 4"><path d="M0 0h7L3.5 4z" fill="#000"/></svg>
<span class="t" style="left:57.2px;top:589px;font-size:12px;font-weight:700;color:#00f;letter-spacing:0.28px;">Nhóm khách hàng: Quận 3</span>
<div style="left:54px;top:608px;width:1859px;height:1px;background:#c8c8c8"></div>
<div class="h" style="left:4px;top:609px;width:29px;height:25px;"></div>
<div style="left:4px;top:634px;width:29px;height:1px;background:#ababab"></div>
<span class="t" style="left:10.0px;top:616px;font-size:12px;font-weight:700;font-family:'DejaVu Serif',serif;font-stretch:normal;">5</span>
<div style="left:54px;top:609px;width:1px;height:25px;background:#c8c8c8"></div>
<span class="t" style="left:59.0px;top:614px;font-size:13.33px;letter-spacing:0.18px;">KH0003</span>
<div style="left:174px;top:609px;width:1px;height:25px;background:#c8c8c8"></div>
<span class="t" style="left:179.0px;top:614px;font-size:13.33px;letter-spacing:0.14px;">Nguyễn Hoàng Thiện</span>
<div style="left:438px;top:609px;width:1px;height:25px;background:#c8c8c8"></div>
<span class="t" style="left:443.0px;top:614px;font-size:13.33px;letter-spacing:0.06px;">Quận 3 Hồ Chí Minh</span>
<div style="left:571px;top:609px;width:1px;height:25px;background:#c8c8c8"></div>
<div style="left:729px;top:609px;width:1px;height:25px;background:#c8c8c8"></div>
<div style="left:885px;top:609px;width:1px;height:25px;background:#c8c8c8"></div>
<div style="left:1055px;top:609px;width:1px;height:25px;background:#c8c8c8"></div>
<div style="left:1188px;top:609px;width:1px;height:25px;background:#c8c8c8"></div>
<div style="left:1321px;top:609px;width:1px;height:25px;background:#c8c8c8"></div>
<span class="t" style="left:1326.0px;top:614px;font-size:13.33px;letter-spacing:0.11px;">GL</span>
<div style="left:1477px;top:609px;width:1px;height:25px;background:#c8c8c8"></div>
<span class="t" style="left:1596.7px;top:614px;font-size:13.33px;letter-spacing:0.33px;">5,000,000</span>
<div style="left:1664px;top:609px;width:1px;height:25px;background:#c8c8c8"></div>
<span class="t" style="left:1902.0px;top:614px;font-size:13.33px;letter-spacing:0.33px;">0</span>
<div style="left:54px;top:634px;width:1859px;height:1px;background:#c8c8c8"></div>
<div style="left:55px;top:635px;width:1858px;height:1px;background:#ababab"></div>
<div class="h" style="left:4px;top:635px;width:29px;height:33px;"></div>
<div class="h" style="left:55px;top:636px;width:1858px;height:32px;"></div>
<div style="left:54px;top:635px;width:1px;height:34px;background:#c8c8c8"></div>
<div style="left:176px;top:638px;width:262px;height:28px;border:1px dashed #c4c4c4;box-sizing:border-box;background:#fff"></div>
<span class="t" style="left:327.0px;top:646px;font-size:12px;font-weight:700;color:#f0f;letter-spacing:0.32px;">Có 1 khách hàng</span>
<div style="left:4px;top:668px;width:1909px;height:1px;background:#c8c8c8"></div>
<div style="left:4px;top:668px;width:29px;height:1px;background:#ababab"></div>
<div style="left:4px;top:973px;width:1909px;height:1px;background:#ababab"></div>
<div class="h" style="left:4px;top:974px;width:1909px;height:34px;"></div>
<div style="left:176px;top:976px;width:262px;height:28px;border:1px dashed #c4c4c4;box-sizing:border-box;background:#fff"></div>
<div style="left:1666px;top:976px;width:245px;height:28px;border:1px dashed #c4c4c4;box-sizing:border-box;background:#fff"></div>
<span class="t" style="left:327.0px;top:984px;font-size:12px;font-weight:700;color:#f00;letter-spacing:0.32px;">Có 5 khách hàng</span>
<span class="t" style="left:1842.2px;top:984px;font-size:12px;font-weight:700;color:#f00;letter-spacing:0.29px;">8,000,000</span>
<div class="hd" style="left:2px;top:1007px;width:1913px;height:1px;"></div>
<!-- status bar -->
<div class="hd" style="left:0px;top:1013px;width:1920px;height:1px;"></div>
<span class="t" style="left:8.0px;top:1022px;font-size:11px;font-weight:700;letter-spacing:0.05px;">Chào mừng: Administrator đến với phần mềm MekongSoft</span>
<div style="left:349px;top:1022px;width:1px;height:11px;background:#c9ced6"></div>
<div style="left:452px;top:1022px;width:1px;height:11px;background:#c9ced6"></div>
<span class="t" style="left:363.0px;top:1022px;font-size:11px;font-weight:700;letter-spacing:-0.19px;">Version: 4.2.0</span>
<span class="t" style="left:466.0px;top:1022px;font-size:11px;font-weight:700;color:#f00;letter-spacing:0.08px;">Ngày: 12/10/2023 10:53:42 SA</span>
<div class="vd" style="left:1613px;top:1015px;width:1px;height:23px;"></div>
<span class="t" style="left:1624.7px;top:1022px;font-size:11px;font-weight:700;letter-spacing:-0.05px;">@2023 MekongSoft. Thông tin hỗ trợ: 0901 000 508</span>
<!-- dialog -->
<div style="left:801px;top:457px;width:319px;height:125px;border:4px solid #6e6e6e;box-sizing:border-box;background:#fff"></div>
<div class="h" style="left:805px;top:461px;width:311px;height:25px;"></div>
<div class="hd dk" style="left:805px;top:486px;width:311px;height:1px;"></div>
<span class="t" style="left:810.2px;top:468px;font-size:11px;font-weight:700;letter-spacing:0.11px;">Phần mềm MekongSoft</span>
<svg style="left:1099px;top:470px" width="9" height="7" viewBox="0 0 9 7"><path d="M0 0h2.8l1.7 2.1l1.7-2.1h2.8l-3.1 3.5l3.1 3.5h-2.8l-1.7-2.1l-1.7 2.1h-2.8l3.1-3.5z" fill="#a6a6a6"/></svg>
<div style="left:818px;top:500px;width:30px;height:30px;border-radius:50%;box-sizing:border-box;border:1px solid #0a4f96;background:linear-gradient(160deg,#0a72d2,#0063c4)"></div>
<span class="t" style="left:826.6px;top:500px;font-size:26px;color:#fff;font-family:'Liberation Sans',serif;font-stretch:normal;text-shadow:0 0 1px #043c7a;">?</span>
<span class="t" style="left:860.8px;top:509px;font-size:11px;letter-spacing:-0.26px;">Bạn có chắc muốn xóa các dòng được chọn không?</span>
<div class="h hh" style="left:879px;top:543px;width:75px;height:23px;border:1px solid #ababab;box-sizing:border-box;background-color:#f1f1f1"></div>
<div style="left:882px;top:546px;width:69px;height:17px;border:1px dotted #000;box-sizing:border-box"></div>
<div class="h" style="left:966px;top:543px;width:75px;height:23px;border:1px solid #ababab;box-sizing:border-box"></div>
<span class="t" style="left:907.6px;top:549px;font-size:11px;letter-spacing:0.29px;">Yes</span>
<span class="t" style="left:996.2px;top:549px;font-size:11px;letter-spacing:-0.18px;">No</span>
<svg style="left:1069px;top:649px" width="14" height="21" viewBox="0 0 14 21"><path d="M1.5 0.7L1.5 16.5L5.3 13.2L7.8 18.5L10.4 17.3L8.2 12L12.8 12Z" fill="#fff" stroke="#0d0d14" stroke-width="1" stroke-linejoin="round"/></svg>
</body></html>
